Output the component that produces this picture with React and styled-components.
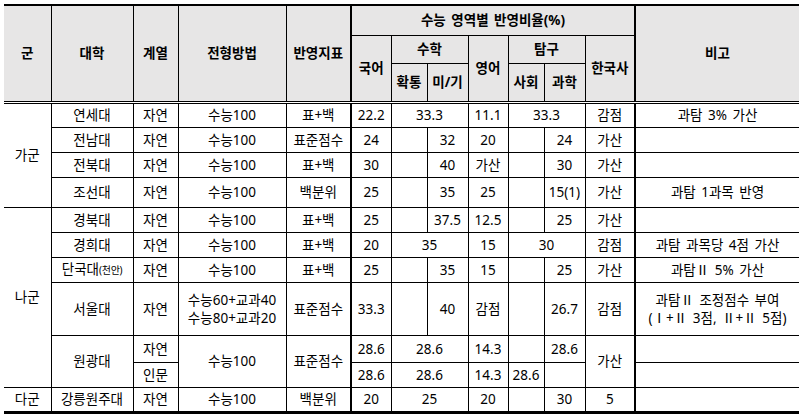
import React from 'react';
import styled, { createGlobalStyle } from 'styled-components';

const GlobalStyle = createGlobalStyle`
  body {
    margin: 0;
    background-color: #fff;
    font-family: "Noto Sans", "Noto Sans CJK KR", sans-serif;
    color: #000;
  }
`;

const Page = styled.div`
  padding: 4px 0 0 4px;
`;

const Table = styled.table`
  width: 795px;
  table-layout: fixed;
  border-collapse: collapse;
  border-top: 2px solid #000;
  border-bottom: 3px solid #000;
  font-size: 13.5px;
  line-height: 18px;
  word-spacing: 2px;
`;

const HeadRow = styled.tr`
  height: ${(props) => props.$height}px;
`;

const BodyRow = styled.tr`
  height: ${(props) => props.$height || 25}px;
`;

const HeadCell = styled.th`
  padding: 0;
  background-color: #e7e6e6;
  font-weight: bold;
  text-align: center;
  vertical-align: middle;
  border: 1px solid #000;
  border-left-width: ${(props) => (props.$thick ? 2 : 1)}px;
  border-bottom: ${(props) => (props.$bottom ? '3px double #000' : '1px solid #000')};
  ${(props) => props.$first && 'border-left: none;'}
  ${(props) => props.$last && 'border-right: none;'}
`;

const Cell = styled.td`
  padding: 0;
  text-align: center;
  vertical-align: middle;
  white-space: nowrap;
  border: 1px solid #000;
  border-left-width: ${(props) => (props.$thick ? 2 : 1)}px;
  ${(props) => props.$first && 'border-left: none;'}
  ${(props) => props.$last && 'border-right: none;'}
`;

const Small = styled.span`
  font-size: 10px;
  letter-spacing: -0.3px;
`;

const widths = [47, 82, 45, 108, 65, 40, 36, 41, 40, 36, 41, 50, 164];

export default function App() {
  return (
    <Page>
      <GlobalStyle />
      <Table>
        <colgroup>
          {widths.map((w, i) => (
            <col key={i} style={{ width: w }} />
          ))}
        </colgroup>
        <thead>
          <HeadRow $height={30}>
            <HeadCell rowSpan={3} $first $bottom>군</HeadCell>
            <HeadCell rowSpan={3} $bottom>대학</HeadCell>
            <HeadCell rowSpan={3} $bottom>계열</HeadCell>
            <HeadCell rowSpan={3} $bottom>전형방법</HeadCell>
            <HeadCell rowSpan={3} $bottom>반영지표</HeadCell>
            <HeadCell colSpan={7} $thick>수능 영역별 반영비율(%)</HeadCell>
            <HeadCell rowSpan={3} $thick $last $bottom>비고</HeadCell>
          </HeadRow>
          <HeadRow $height={28}>
            <HeadCell rowSpan={2} $thick $bottom>국어</HeadCell>
            <HeadCell colSpan={2}>수학</HeadCell>
            <HeadCell rowSpan={2} $bottom>영어</HeadCell>
            <HeadCell colSpan={2}>탐구</HeadCell>
            <HeadCell rowSpan={2} $bottom>한국사</HeadCell>
          </HeadRow>
          <HeadRow $height={39}>
            <HeadCell $bottom>확통</HeadCell>
            <HeadCell $bottom>미/기</HeadCell>
            <HeadCell $bottom>사회</HeadCell>
            <HeadCell $bottom>과학</HeadCell>
          </HeadRow>
        </thead>
        <tbody>
          <BodyRow>
            <Cell rowSpan={4} $first>가군</Cell>
            <Cell>연세대</Cell>
            <Cell>자연</Cell>
            <Cell>수능100</Cell>
            <Cell>표+백</Cell>
            <Cell $thick>22.2</Cell>
            <Cell colSpan={2}>33.3</Cell>
            <Cell>11.1</Cell>
            <Cell colSpan={2}>33.3</Cell>
            <Cell>감점</Cell>
            <Cell $thick $last>과탐 3% 가산</Cell>
          </BodyRow>
          <BodyRow>
            <Cell>전남대</Cell>
            <Cell>자연</Cell>
            <Cell>수능100</Cell>
            <Cell>표준점수</Cell>
            <Cell $thick>24</Cell>
            <Cell />
            <Cell>32</Cell>
            <Cell>20</Cell>
            <Cell />
            <Cell>24</Cell>
            <Cell>가산</Cell>
            <Cell $thick $last />
          </BodyRow>
          <BodyRow>
            <Cell>전북대</Cell>
            <Cell>자연</Cell>
            <Cell>수능100</Cell>
            <Cell>표+백</Cell>
            <Cell $thick>30</Cell>
            <Cell />
            <Cell>40</Cell>
            <Cell>가산</Cell>
            <Cell />
            <Cell>30</Cell>
            <Cell>가산</Cell>
            <Cell $thick $last />
          </BodyRow>
          <BodyRow $height={30}>
            <Cell>조선대</Cell>
            <Cell>자연</Cell>
            <Cell>수능100</Cell>
            <Cell>백분위</Cell>
            <Cell $thick>25</Cell>
            <Cell />
            <Cell>35</Cell>
            <Cell>25</Cell>
            <Cell />
            <Cell>15(1)</Cell>
            <Cell>가산</Cell>
            <Cell $thick $last>과탐 1과목 반영</Cell>
          </BodyRow>

          <BodyRow>
            <Cell rowSpan={6} $first>나군</Cell>
            <Cell>경북대</Cell>
            <Cell>자연</Cell>
            <Cell>수능100</Cell>
            <Cell>표+백</Cell>
            <Cell $thick>25</Cell>
            <Cell />
            <Cell>37.5</Cell>
            <Cell>12.5</Cell>
            <Cell />
            <Cell>25</Cell>
            <Cell>가산</Cell>
            <Cell $thick $last />
          </BodyRow>
          <BodyRow>
            <Cell>경희대</Cell>
            <Cell>자연</Cell>
            <Cell>수능100</Cell>
            <Cell>표+백</Cell>
            <Cell $thick>20</Cell>
            <Cell colSpan={2}>35</Cell>
            <Cell>15</Cell>
            <Cell colSpan={2}>30</Cell>
            <Cell>감점</Cell>
            <Cell $thick $last>과탐 과목당 4점 가산</Cell>
          </BodyRow>
          <BodyRow>
            <Cell>
              단국대<Small>(천안)</Small>
            </Cell>
            <Cell>자연</Cell>
            <Cell>수능100</Cell>
            <Cell>표+백</Cell>
            <Cell $thick>25</Cell>
            <Cell />
            <Cell>35</Cell>
            <Cell>15</Cell>
            <Cell />
            <Cell>25</Cell>
            <Cell>가산</Cell>
            <Cell $thick $last>과탐Ⅱ 5% 가산</Cell>
          </BodyRow>
          <BodyRow $height={53}>
            <Cell>서울대</Cell>
            <Cell>자연</Cell>
            <Cell>
              수능60+교과40
              <br />
              수능80+교과20
            </Cell>
            <Cell>표준점수</Cell>
            <Cell $thick>33.3</Cell>
            <Cell />
            <Cell>40</Cell>
            <Cell>감점</Cell>
            <Cell />
            <Cell>26.7</Cell>
            <Cell>감점</Cell>
            <Cell $thick $last>
              과탐Ⅱ 조정점수 부여
              <br />
              (Ⅰ+Ⅱ 3점, Ⅱ+Ⅱ 5점)
            </Cell>
          </BodyRow>
          <BodyRow $height={27}>
            <Cell rowSpan={2}>원광대</Cell>
            <Cell>자연</Cell>
            <Cell rowSpan={2}>수능100</Cell>
            <Cell rowSpan={2}>표준점수</Cell>
            <Cell $thick>28.6</Cell>
            <Cell colSpan={2}>28.6</Cell>
            <Cell>14.3</Cell>
            <Cell />
            <Cell>28.6</Cell>
            <Cell rowSpan={2}>가산</Cell>
            <Cell $thick $last />
          </BodyRow>
          <BodyRow>
            <Cell>인문</Cell>
            <Cell $thick>28.6</Cell>
            <Cell colSpan={2}>28.6</Cell>
            <Cell>14.3</Cell>
            <Cell>28.6</Cell>
            <Cell />
            <Cell $thick $last />
          </BodyRow>

          <BodyRow>
            <Cell $first>다군</Cell>
            <Cell>강릉원주대</Cell>
            <Cell>자연</Cell>
            <Cell>수능100</Cell>
            <Cell>백분위</Cell>
            <Cell $thick>20</Cell>
            <Cell colSpan={2}>25</Cell>
            <Cell>20</Cell>
            <Cell />
            <Cell>30</Cell>
            <Cell>5</Cell>
            <Cell $thick $last />
          </BodyRow>
        </tbody>
      </Table>
    </Page>
  );
}
